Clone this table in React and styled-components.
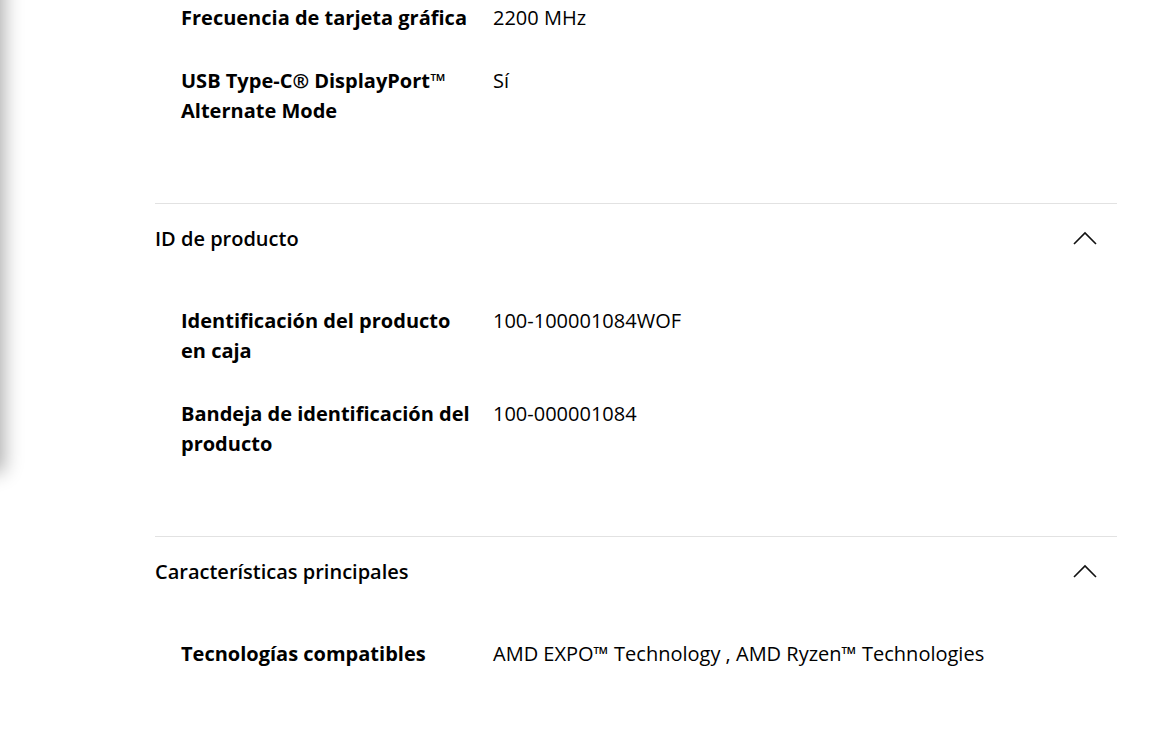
import React from "react";
import styled, { createGlobalStyle } from "styled-components";

const GlobalStyle = createGlobalStyle`
    html, body {
        margin: 0;
        padding: 0;
        background: #ffffff;
        font-family: 'Open Sans', 'Noto Sans', sans-serif;
        color: #000000;
    }
`;

// drawer that sits just off the left edge, only its shadow shows
const Drawer = styled.div`
    position: fixed;
    left: -120px;
    top: -20px;
    width: 120px;
    height: 488px;
    background: #ffffff;
    box-shadow: 0 0 18px 4px rgba(0, 0, 0, 0.32);
`;

const Page = styled.div`
    padding: 3px 54px 0 155px;
`;

const Section = styled.section`
    border-top: ${p => (p.first ? "none" : "1px solid #e2e2e2")};
`;

const Header = styled.div`
    height: 72px;
    box-sizing: border-box;
    padding: 0 20px 4px 0;
    display: flex;
    align-items: center;
    justify-content: space-between;
    font-size: 20px;
    font-weight: 600;
`;

const Body = styled.div`
    padding: ${p => (p.first ? "0" : "30px")} 0 77px 26px;
    display: flex;
    flex-direction: column;
    gap: 33px;
`;

const Row = styled.div`
    display: grid;
    grid-template-columns: 292px 1fr;
    column-gap: 20px;
    font-size: 20px;
    line-height: 30px;
`;

const Label = styled.div`
    font-weight: 700;
`;

const Value = styled.div`
    font-weight: 400;
`;

const Chevron = () => (
    <svg width="24" height="14" viewBox="0 0 24 14" fill="none">
        <path d="M1 13 L12 2 L23 13" stroke="#111" strokeWidth="1.6" />
    </svg>
);

const sections = [
    {
        first: true,
        rows: [
            ["Frecuencia de tarjeta gráfica", "2200 MHz"],
            ["USB Type-C® DisplayPort™ Alternate Mode", "Sí"],
        ],
    },
    {
        title: "ID de producto",
        rows: [
            ["Identificación del producto en caja", "100-100001084WOF"],
            ["Bandeja de identificación del producto", "100-000001084"],
        ],
    },
    {
        title: "Características principales",
        rows: [
            ["Tecnologías compatibles", "AMD EXPO™ Technology , AMD Ryzen™ Technologies"],
        ],
    },
];

function App() {
    return (
        <>
            <GlobalStyle />
            <Drawer />
            <Page>
                {sections.map((s, i) => (
                    <Section key={i} first={s.first}>
                        {s.title && (
                            <Header>
                                {s.title}
                                <Chevron />
                            </Header>
                        )}
                        <Body first={s.first}>
                            {s.rows.map(([k, v]) => (
                                <Row key={k}>
                                    <Label>{k}</Label>
                                    <Value>{v}</Value>
                                </Row>
                            ))}
                        </Body>
                    </Section>
                ))}
            </Page>
        </>
    );
}

export default App;
